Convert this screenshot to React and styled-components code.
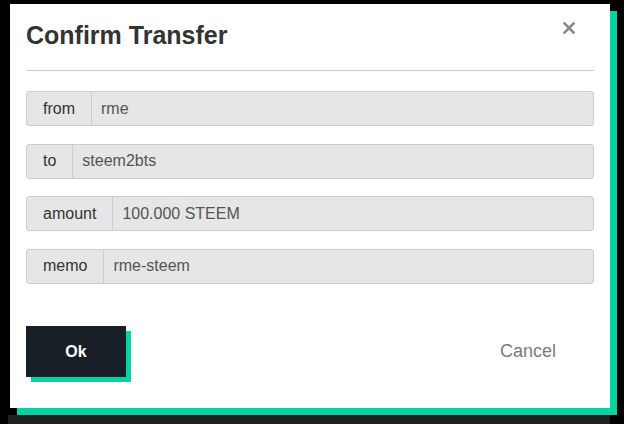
import React from "react";
import styled, { createGlobalStyle } from "styled-components";

const GlobalStyle = createGlobalStyle`
  html, body {
    margin: 0;
    background: #000;
    font-family: "Liberation Sans", Arial, sans-serif;
  }
`;

const Page = styled.div`
  padding: 4px 0 0 10px;
`;

const Modal = styled.div`
  width: 600px;
  height: 404px;
  box-sizing: border-box;
  padding: 17px 16px 0 16px;
  background: #fff;
  box-shadow: 7px 7px 0 #05d3a1;
  display: flex;
  flex-direction: column;
`;

const Header = styled.div`
  display: flex;
  justify-content: space-between;
  align-items: flex-start;
  padding-bottom: 21px;
  border-bottom: 1px solid #cdcdcd;
`;

const Title = styled.h4`
  margin: 0;
  font-size: 25px;
  line-height: 28px;
  font-weight: bold;
  color: #333;
`;

const Close = styled.button`
  border: 0;
  background: none;
  padding: 0;
  margin: 1px 19px 0 0;
  width: 12px;
  height: 12px;
  display: flex;
  cursor: pointer;
`;

const Fields = styled.div`
  display: flex;
  flex-direction: column;
  gap: 17.5px;
  margin-top: 20px;
`;

const InputGroup = styled.div`
  display: flex;
  height: 35px;
  box-sizing: border-box;
  border: 1px solid #cccccc;
  border-radius: 3px;
  background: #e6e6e6;
  font-size: 16px;
`;

const Addon = styled.span`
  display: flex;
  align-items: center;
  padding: 0 16px;
  border-right: 1px solid #cccccc;
  color: #333;
`;

const Value = styled.span`
  display: flex;
  align-items: center;
  padding: 0 9px;
  color: #555;
`;

const Footer = styled.div`
  display: flex;
  justify-content: space-between;
  align-items: center;
  margin-top: 42.5px;
`;

const OkButton = styled.button`
  width: 100px;
  height: 51px;
  border: 0;
  background: #191f26;
  color: #fff;
  font-family: inherit;
  font-size: 16px;
  font-weight: bold;
  box-shadow: 5px 5px 0 #05d3a1;
  cursor: pointer;
`;

const CancelButton = styled.button`
  height: 51px;
  border: 0;
  background: none;
  padding: 0 38px;
  color: #777c82;
  font-family: inherit;
  font-size: 18px;
  cursor: pointer;
`;

const Strip = styled.div`
  margin: 7px 0 0 -2px;
  width: 602px;
  height: 9px;
  background: #212121;
`;

const fields = [
  ["from", "rme"],
  ["to", "steem2bts"],
  ["amount", "100.000 STEEM"],
  ["memo", "rme-steem"],
];

export default function App() {
  return (
    <Page>
      <GlobalStyle />
      <Modal>
        <Header>
          <Title>Confirm Transfer</Title>
          <Close aria-label="Close">
            <svg width="12" height="12" viewBox="0 0 12 12">
              <path
                d="M1.5 1.5 L10.5 10.5 M10.5 1.5 L1.5 10.5"
                stroke="#888"
                strokeWidth="2.6"
                strokeLinecap="square"
              />
            </svg>
          </Close>
        </Header>
        <Fields>
          {fields.map(([label, value]) => (
            <InputGroup key={label}>
              <Addon>{label}</Addon>
              <Value>{value}</Value>
            </InputGroup>
          ))}
        </Fields>
        <Footer>
          <OkButton>Ok</OkButton>
          <CancelButton>Cancel</CancelButton>
        </Footer>
      </Modal>
      <Strip />
    </Page>
  );
}
